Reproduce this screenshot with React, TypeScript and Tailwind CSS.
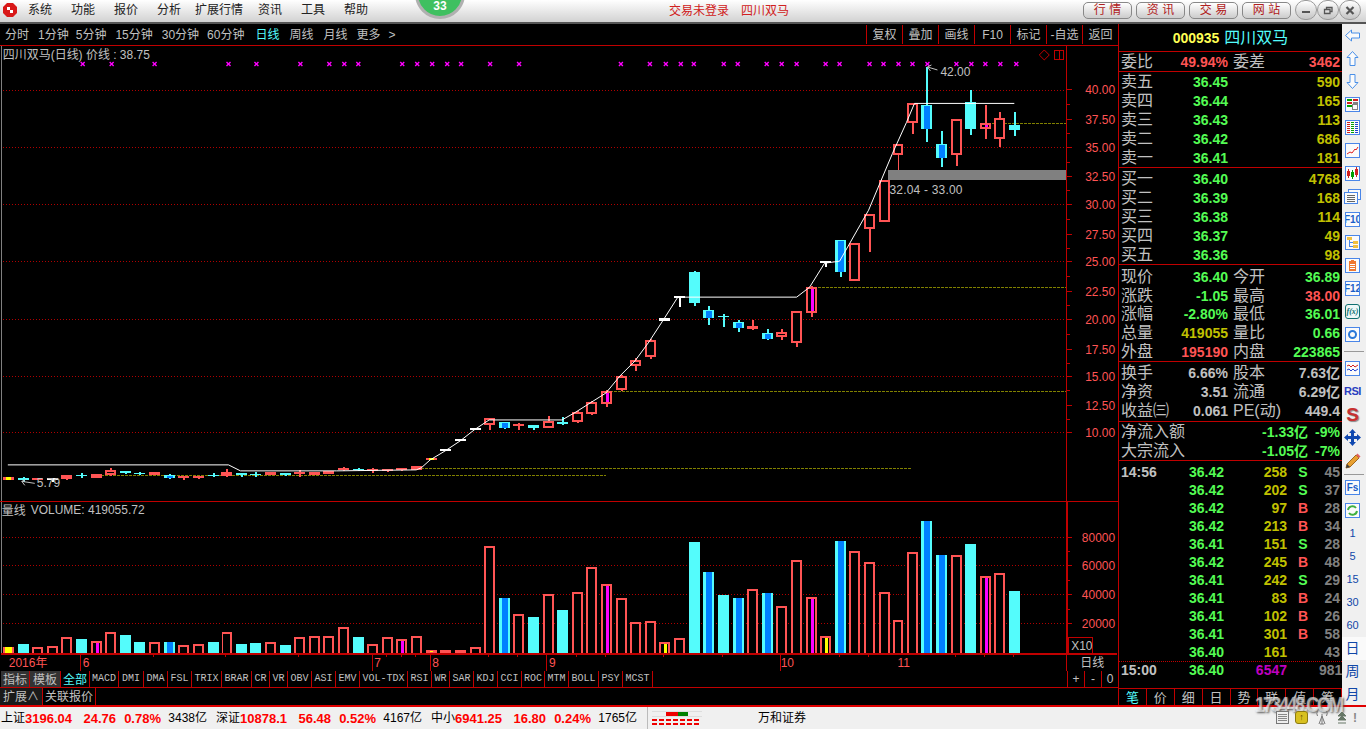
import React from 'react';

const RED = '#ff5454';
const CYAN = '#54fcfc';
const BLUE = '#0080ff';
const LINE = '#c00000';

type C = [number, number, number, number, string];

// top, bottom, wick top, wick bottom, kind: h hollow, s solid red, c cyan, b cyan+blue, m hollow+magenta, w white, y orange
const candles: C[] = [
  [478, 481, 478, 481, 'y'], [479, 481, 478, 483, 'c'], [479, 481, 479, 481, 's'], [479, 481, 479, 483, 'w'],
  [476, 480, 476, 481, 's'], [476, 477, 474, 479, 'c'], [475, 479, 475, 479, 's'], [471, 476, 469, 477, 'h'],
  [472, 474, 472, 475, 'c'], [474, 475, 473, 476, 'c'], [473, 476, 473, 476, 's'], [476, 479, 475, 480, 'b'],
  [477, 479, 477, 481, 's'], [477, 479, 477, 480, 's'], [476, 477, 474, 478, 'c'], [473, 477, 470, 478, 'h'],
  [474, 476, 474, 478, 'c'], [475, 476, 473, 478, 'c'], [473, 476, 473, 476, 's'], [474, 476, 474, 477, 'c'],
  [473, 475, 471, 478, 's'], [473, 476, 473, 476, 's'], [472, 475, 472, 475, 's'], [469, 471, 468, 472, 's'],
  [470, 471, 469, 472, 'c'], [470, 472, 469, 474, 's'], [470, 472, 470, 473, 's'], [469, 471, 469, 472, 's'],
  [467, 471, 467, 471, 's'], [459, 461, 459, 461, 'y'], [450, 452, 450, 452, 'w'], [440, 442, 440, 442, 'w'],
  [429, 431, 429, 431, 'w'], [419, 426, 419, 431, 'h'], [423, 429, 423, 430, 'b'], [425, 427, 424, 431, 's'],
  [426, 429, 426, 431, 'c'], [422, 429, 417, 429, 'h'], [423, 425, 418, 426, 'c'], [413, 423, 412, 424, 'h'],
  [403, 415, 402, 416, 'h'], [392, 405, 391, 408, 'm'], [376, 391, 375, 392, 'h'], [360, 366, 358, 371, 'h'],
  [340, 357, 339, 359, 'h'], [318, 321, 318, 321, 'w'], [296, 298, 296, 307, 'w'], [272, 303, 271, 306, 'c'],
  [310, 318, 306, 325, 'b'], [316, 317, 314, 327, 'c'], [322, 328, 320, 332, 'b'], [326, 329, 320, 330, 's'],
  [333, 339, 329, 340, 'b'], [332, 337, 329, 340, 'h'], [311, 343, 311, 347, 'h'], [287, 313, 286, 317, 'm'],
  [261, 263, 261, 267, 'w'], [240, 272, 240, 277, 'b'], [243, 281, 243, 281, 'h'], [214, 229, 214, 252, 'h'],
  [180, 222, 180, 222, 'h'], [144, 155, 144, 170, 'h'], [103, 123, 103, 134, 'h'], [105, 129, 67, 142, 'b'],
  [144, 158, 131, 167, 'b'], [119, 155, 119, 166, 'h'], [102, 129, 90, 135, 'c'], [123, 129, 105, 139, 'm'],
  [118, 139, 112, 147, 'h'], [125, 130, 112, 136, 'c'],
];

const volumes: [number, string][] = [
  [648, 'y'], [645, 'c'], [648, 'h'], [647, 'h'], [638, 'h'], [640, 'c'], [642, 'm'], [633, 'h'], [636, 'c'], [643, 'c'],
  [643, 'h'], [643, 'b'], [646, 'h'], [645, 'h'], [643, 'c'], [633, 'h'], [645, 'c'], [644, 'c'], [643, 'h'], [646, 'c'],
  [638, 'h'], [637, 'h'], [637, 'h'], [628, 'h'], [638, 'c'], [645, 'h'], [638, 'h'], [640, 'm'], [637, 'h'], [651, 's'],
  [651, 's'], [651, 's'], [648, 'h'], [547, 'h'], [599, 'b'], [615, 'h'], [618, 'c'], [595, 'h'], [611, 'c'], [593, 'h'],
  [568, 'h'], [585, 'm'], [599, 'h'], [623, 'h'], [622, 'h'], [643, 'k'], [639, 'h'], [543, 'c'], [573, 'b'], [596, 'c'],
  [599, 'b'], [590, 'h'], [594, 'b'], [607, 'h'], [561, 'h'], [598, 'm'], [637, 'k'], [542, 'b'], [552, 'h'], [563, 'h'],
  [593, 'h'], [621, 'h'], [553, 'h'], [522, 'b'], [556, 'b'], [556, 'h'], [545, 'c'], [577, 'm'], [574, 'h'], [592, 'c'],
];

const marks = [82, 111, 154, 228, 256, 300, 329, 344, 358, 402, 417, 432, 447, 461, 490, 519, 621, 650, 666, 681, 694, 724, 738, 767, 782, 797, 826, 840, 870, 884, 899, 913, 928, 957, 972, 986, 1001, 1017];

const prices: [string, number][] = [
  ['40.00', 89], ['37.50', 119], ['35.00', 147], ['32.50', 176], ['30.00', 204], ['27.50', 234], ['25.00', 261],
  ['22.50', 291], ['20.00', 319], ['17.50', 349], ['15.00', 376], ['12.50', 406], ['10.00', 433],
];

const cxOf = (i: number) => Math.round(7 + i * 14.61);

function Candle({ d, i }: { d: C; i: number }) {
  const [top, bottom, wt, wb, kind] = d;
  const cx = cxOf(i);
  const h = Math.max(bottom - top, 1);
  const main = kind === 'c' || kind === 'b' ? CYAN : kind === 'w' ? '#ffffff' : RED;
  return (
    <g>
      <rect x={cx} y={wt} width={2} height={wb - wt} fill={main} />
      <rect x={cx - 5} y={top} width={11} height={h} fill={main} />
      {(kind === 'h' || kind === 'm') && h > 4 && <rect x={cx - 3} y={top + 2} width={7} height={h - 4} fill="#000" />}
      {kind === 'b' && <rect x={cx - 2} y={top + 1} width={6} height={h - 1} fill={BLUE} />}
      {kind === 'm' && <rect x={cx} y={top + 2} width={3} height={h - 4} fill="#ff00ff" />}
      {kind === 'y' && <rect x={cx - 2} y={top} width={5} height={h} fill="#ffff00" />}
    </g>
  );
}

function VolBar({ top, kind, i }: { top: number; kind: string; i: number }) {
  const cx = cxOf(i);
  const h = 654 - top;
  const solid = kind === 'c' || kind === 'b';
  return (
    <g>
      <rect x={cx - 5} y={top} width={11} height={h} fill={solid ? CYAN : RED} />
      {!solid && kind !== 's' && kind !== 'y' && h > 4 && <rect x={cx - 3} y={top + 2} width={7} height={h - 2} fill="#000" />}
      {kind === 'b' && <rect x={cx - 2} y={top} width={6} height={h} fill={BLUE} />}
      {kind === 'm' && <rect x={cx} y={top + 2} width={3} height={h - 2} fill="#ff00ff" />}
      {kind === 'k' && <rect x={cx} y={top + 2} width={3} height={h - 2} fill="#ffff00" />}
      {kind === 'y' && <rect x={cx - 3} y={top} width={7} height={h} fill="#ffff00" />}
      {kind === 's' && i === 29 && <rect x={cx - 1} y={top + 1} width={3} height={1} fill="#ffff00" />}
    </g>
  );
}

function MainChart() {
  const trend = '7,465 228,465 240,471 336,471 416,470 421,468 430,460 445,451 460,441 474,430 489,420 562,420 576,412 606,393 620,376 635,361 649,342 664,319 678,297 797,297 810,287 825,263 840,261 869,210 893,153 907,122 915,103 1015,103';
  return (
    <svg className="block" width={1118} height={456} viewBox="0 46 1118 456" shapeRendering="crispEdges">
      <rect x={0} y={46} width={1} height={456} fill="#808080" />
      {[90, 147, 204, 261, 319, 376, 433].map(y => (
        <line key={y} x1={2} x2={1067} y1={y + 0.5} y2={y + 0.5} stroke="#b00000" strokeDasharray="1 2" />
      ))}
      <line x1={985} x2={1067} y1={123.5} y2={123.5} stroke="#808000" strokeDasharray="3 1" />
      <line x1={810} x2={1067} y1={287.5} y2={287.5} stroke="#808000" strokeDasharray="3 1" />
      <line x1={606} x2={1067} y1={392.5} y2={392.5} stroke="#808000" strokeDasharray="3 1" />
      <line x1={421} x2={912} y1={469.5} y2={469.5} stroke="#808000" strokeDasharray="3 1" />
      <line x1={100} x2={606} y1={476.5} y2={476.5} stroke="#808000" strokeDasharray="3 1" />
      <rect x={888} y={170} width={179} height={10} fill="#808080" />
      {candles.map((d, i) => <Candle key={i} d={d} i={i} />)}
      <polyline points={trend} transform="translate(0 0.5)" fill="none" stroke="#ffffff" strokeWidth={1} shapeRendering="auto" />
      {marks.map(x => (
        <g key={x} stroke="#ff00ff" strokeWidth={1.4} shapeRendering="auto">
          <line x1={x - 2} y1={62} x2={x + 2} y2={66} />
          <line x1={x - 2} y1={66} x2={x + 2} y2={62} />
        </g>
      ))}
      <text x={2} y={59} fontSize={12} fill="#c0c0c0">四川双马(日线) 价线 : 38.75</text>
      <text x={890} y={194} fontSize={12} fill="#c0c0c0" letterSpacing={0.2}>32.04 - 33.00</text>
      <g stroke="#c0c0c0" fill="none" shapeRendering="auto">
        <path d="M928 67 L938 70 M928 67 L932 65 M928 67 L931 71" />
        <path d="M21 482 L34 484 M21 482 L25 480 M21 482 L24 486" />
      </g>
      <text x={941} y={76} fontSize={12} fill="#c0c0c0">42.00</text>
      <text x={36} y={488} fontSize={12} fill="#c0c0c0">5.79</text>
      <path d="M1045 50 L1050 55 L1045 60 L1040 55 Z" fill="none" stroke="#c00000" shapeRendering="auto" />
      <rect x={1055.5} y={50.5} width={9} height={9} fill="none" stroke="#c00000" />
      <rect x={1060} y={50} width={1} height={10} fill="#c00000" />
      <rect x={1067} y={46} width={1} height={456} fill={LINE} />
      {prices.map(([t, y], i) => (
        <g key={t}>
          <rect x={1068} y={y} width={5} height={1} fill={LINE} />
          {i > 0 && <rect x={1068} y={Math.round((y + prices[i - 1][1]) / 2)} width={3} height={1} fill={LINE} />}
          <text x={1116} y={y + 5} fontSize={12} textAnchor="end" fill={RED}>{t}</text>
        </g>
      ))}
    </svg>
  );
}

function VolChart() {
  const minor = [152, 225, 298, 386, 401, 415, 488, 517, 576, 605, 663, 722, 839, 868, 956, 985, 1014];
  const dates: [string, number][] = [['6', 82], ['7', 374], ['8', 432], ['9', 549], ['10', 781], ['11', 898]];
  return (
    <svg className="block" width={1118} height={169} viewBox="0 503 1118 169" shapeRendering="crispEdges">
      <rect x={0} y={503} width={1} height={152} fill="#808080" />
      {[538, 566, 595, 624].map(y => (
        <line key={y} x1={2} x2={1067} y1={y + 0.5} y2={y + 0.5} stroke="#b00000" strokeDasharray="1 2" />
      ))}
      {volumes.map(([top, kind], i) => <VolBar key={i} top={top} kind={kind} i={i} />)}
      <text x={1} y={516} fontSize={12} fill="#c0c0c0">量线</text>
      <text x={30} y={515} fontSize={12} fill="#c0c0c0">VOLUME: 419055.72</text>
      <rect x={1067} y={503} width={2} height={152} fill={LINE} />
      {[['80000', 538], ['60000', 566], ['40000', 595], ['20000', 624]].map(([t, y]) => (
        <g key={t as string}>
          <rect x={1068} y={y as number} width={5} height={1} fill={LINE} />
          <text x={1116} y={(y as number) + 5} fontSize={12} textAnchor="end" fill={RED}>{t}</text>
        </g>
      ))}
      {[552, 581, 610].map(y => <rect key={y} x={1068} y={y} width={3} height={1} fill={LINE} />)}
      <rect x={1069.5} y={638.5} width={24} height={16} fill="none" stroke={LINE} />
      <text x={1072} y={651} fontSize={12} fill="#c0c0c0">X10</text>
      <rect x={0} y={654} width={1118} height={2} fill={LINE} />
      {minor.map(x => <rect key={x} x={x} y={656} width={1} height={2} fill={LINE} />)}
      {[79, 372, 430, 546, 780, 897].map(x => <rect key={x} x={x} y={655} width={1} height={17} fill={LINE} />)}
      <rect x={1067} y={655} width={1} height={17} fill={LINE} />
      <text x={8} y={668} fontSize={12} fill={RED}>2016年</text>
      {dates.map(([t, x]) => <text key={t} x={x} y={668} fontSize={12} fill={RED}>{t}</text>)}
      <text x={1093} y={668} fontSize={12} textAnchor="middle" fill="#c0c0c0">日线</text>
    </svg>
  );
}

function TopBar() {
  const menus: [string, string][] = [['系统', 'ml-[11px]'], ['功能', 'ml-[19px]'], ['报价', 'ml-[19px]'], ['分析', 'ml-[19px]'], ['扩展行情', 'ml-[14px]'], ['资讯', 'ml-[15px]'], ['工具', 'ml-[19px]'], ['帮助', 'ml-[19px]']];
  return (
    <div className="h-[24px] flex items-center relative bg-linear-to-b from-[#ffffff] to-[#d2d2d2] border-b-2 border-[#555555] overflow-hidden">
      <svg width={14} height={14} viewBox="0 0 14 14" className="ml-[3px] -mt-[2px]">
        <path d="M4 0h6l4 4v6l-4 4H4L0 10V4z" fill="#d81818" />
        <rect x={4} y={4} width={3} height={3} fill="#fff" />
        <rect x={7} y={7} width={3} height={3} fill="#fff" />
      </svg>
      {menus.map(([t, c]) => <span key={t} className={`${c} text-[12px] leading-none text-[#222222] -mt-[2px]`}>{t}</span>)}
      <div className="absolute left-[415px] -top-[31px] w-[50px] h-[50px] rounded-full bg-[#3fc060] border-[3px] border-[#b0b0b0] flex items-end justify-center pb-[4px]">
        <span className="text-[12px] font-bold text-white leading-none">33</span>
      </div>
      <span className="absolute left-[669px] top-[4px] text-[12px] leading-[14px] text-[#d02020]">交易未登录</span>
      <span className="absolute left-[741px] top-[4px] text-[12px] leading-[14px] text-[#d02020]">四川双马</span>
      <div className="ml-auto flex items-center gap-[4px] -mt-[2px]">
        {['行 情', '资 讯', '交 易', '网 站'].map(t => (
          <div key={t} className="w-[49px] h-[17px] rounded-[5px] border border-[#888888] bg-linear-to-b from-[#ffffff] to-[#cccccc] flex items-center justify-center text-[12px] leading-none text-[#b02020]">{t}</div>
        ))}
        <div className="flex mr-[5px]">
          <WinBtn><path d="M3 8 H11" stroke="#555555" strokeWidth={2} fill="none" /></WinBtn>
          <WinBtn><path d="M5.5 5.5 V3.5 H11 V7.5 H9 M3.5 5.5 H9 V9.5 H3.5 Z" stroke="#555555" strokeWidth={1.3} fill="none" /></WinBtn>
          <WinBtn><path d="M3.5 3 L10.5 10 M10.5 3 L3.5 10" stroke="#555555" strokeWidth={2.2} fill="none" /></WinBtn>
        </div>
      </div>
    </div>
  );
}

function WinBtn({ children }: { children: React.ReactNode }) {
  return (
    <div className="w-[22px] h-[20px] rounded-full border border-[#9a9a9a] bg-linear-to-b from-[#ffffff] to-[#c4c4c4] flex items-center justify-center">
      <svg width={14} height={13} viewBox="0 0 14 13">{children}</svg>
    </div>
  );
}

function ToolBar() {
  const left: [string, string][] = [
    ['分时', 'ml-[5px]'], ['1分钟', 'ml-[9px]'], ['5分钟', 'ml-[7px]'], ['15分钟', 'ml-[9px]'], ['30分钟', 'ml-[9px]'], ['60分钟', 'ml-[8px]'],
    ['日线', 'ml-[11px] text-[#54fcfc]'], ['周线', 'ml-[10px]'], ['月线', 'ml-[10px]'], ['更多', 'ml-[9px]'], ['>', 'ml-[8px]'],
  ];
  return (
    <div className="h-[22px] flex items-center pt-[1px] border-b border-[#c00000] text-[12px] leading-none text-[#c0c0c0]">
      {left.map(([t, c]) => <span key={t} className={c}>{t}</span>)}
      <div className="ml-auto flex h-full -mt-[1px]">
        {['复权', '叠加', '画线', 'F10', '标记', '-自选', '返回'].map(t => (
          <div key={t} className="w-[36px] flex items-center justify-center pt-[1px] border-l border-[#c00000]">{t}</div>
        ))}
      </div>
    </div>
  );
}

function TabRows() {
  const cjk = "text-[12px] [font-family:'Noto_Sans_CJK_SC',sans-serif]";
  const latin = "text-[10px] [font-family:'Liberation_Mono',monospace]";
  const tabs: [string, string, string][] = [
    ['指标', 'w-[29px]', `bg-[#333333] ${cjk}`], ['模板', 'w-[31px]', `bg-[#333333] ${cjk}`], ['全部', 'w-[29px]', `${cjk} text-[#54fcfc]`],
    ['MACD', 'w-[29px]', latin], ['DMI', 'w-[25px]', latin], ['DMA', 'w-[24px]', latin], ['FSL', 'w-[24px]', latin], ['TRIX', 'w-[30px]', latin], ['BRAR', 'w-[30px]', latin],
    ['CR', 'w-[18px]', latin], ['VR', 'w-[18px]', latin], ['OBV', 'w-[24px]', latin], ['ASI', 'w-[24px]', latin], ['EMV', 'w-[24px]', latin], ['VOL-TDX', 'w-[48px]', latin],
    ['RSI', 'w-[24px]', latin], ['WR', 'w-[18px]', latin], ['SAR', 'w-[24px]', latin], ['KDJ', 'w-[24px]', latin], ['CCI', 'w-[24px]', latin], ['ROC', 'w-[23px]', latin],
    ['MTM', 'w-[24px]', latin], ['BOLL', 'w-[30px]', latin], ['PSY', 'w-[24px]', latin], ['MCST', 'w-[30px]', latin],
  ];
  return (
    <>
      <div className="h-[17px] flex border-b border-[#c00000] text-[#c0c0c0]">
        <div className="w-[1px]" />
        {tabs.map(([t, w, c]) => (
          <div key={t} className={`${w} ${c} flex items-center justify-center border-r border-[#c00000] leading-none`}>{t}</div>
        ))}
        <div className="ml-auto flex text-[12px] leading-none">
          {['+', '-', '0'].map(t => <div key={t} className="w-[17px] flex items-center justify-center border-l border-[#c00000]">{t}</div>)}
        </div>
      </div>
      <div className="h-[17px] flex text-[12px] leading-none text-[#c0c0c0]">
        <div className="w-[43px] flex items-center justify-center border-r border-[#c00000] bg-[#1a1a1a]">扩展∧</div>
        <div className="w-[53px] flex items-center justify-center border-r border-[#c00000]">关联报价</div>
      </div>
    </>
  );
}

function Row({ l, v, vc, r, rv, rc }: { l: string; v: string; vc: string; r?: string; rv: string; rc: string }) {
  return (
    <div className="grid grid-cols-[107px_107px] gap-x-[5px] pl-[2px] items-center">
      <div className="flex justify-between items-center h-full">
        <span className="text-[16px] leading-none text-[#c0c0c0]">{l}</span>
        <span className={`text-[14px] font-bold leading-none ${vc}`}>{v}</span>
      </div>
      <div className="flex justify-between items-center h-full">
        <span className="text-[16px] leading-none text-[#c0c0c0]">{r}</span>
        <span className={`text-[14px] font-bold leading-none ${rc}`}>{rv}</span>
      </div>
    </div>
  );
}

const G = 'text-[#54fc54]';
const Y = 'text-[#c0c000]';
const R = 'text-[#ff5454]';
const W = 'text-[#c0c0c0]';

const ticks: [string, string, string, string][] = [
  ['36.42', '258', 'S', '45'], ['36.42', '202', 'S', '37'], ['36.42', '97', 'B', '28'], ['36.42', '213', 'B', '34'],
  ['36.41', '151', 'S', '28'], ['36.42', '245', 'B', '48'], ['36.41', '242', 'S', '29'], ['36.41', '83', 'B', '24'],
  ['36.41', '102', 'B', '26'], ['36.41', '301', 'B', '58'], ['36.40', '161', '', '43'],
];

function QuotePanel() {
  return (
    <div className="w-[224px] border-l border-[#c00000] flex flex-col">
      <div className="h-[28px] flex items-center justify-center gap-[5px] border-b border-[#c00000]">
        <span className="text-[14px] font-bold leading-none text-[#ffff54]">000935</span>
        <span className="text-[16px] leading-none text-[#54fcfc]">四川双马</span>
      </div>
      <div className="h-[20px] grid border-b border-[#c00000]">
        <Row l="委比" v="49.94%" vc={R} r="委差" rv="3462" rc={R} />
      </div>
      <div className="h-[96px] grid grid-rows-5 border-b border-[#c00000]">
        {[['卖五', '36.45', '590'], ['卖四', '36.44', '165'], ['卖三', '36.43', '113'], ['卖二', '36.42', '686'], ['卖一', '36.41', '181']].map(([a, b, c]) => (
          <Row key={a} l={a} v={b} vc={G} rv={c} rc={Y} />
        ))}
      </div>
      <div className="h-[97px] grid grid-rows-5 pt-[2px] border-b border-[#c00000]">
        {[['买一', '36.40', '4768'], ['买二', '36.39', '168'], ['买三', '36.38', '114'], ['买四', '36.37', '49'], ['买五', '36.36', '98']].map(([a, b, c]) => (
          <Row key={a} l={a} v={b} vc={G} rv={c} rc={Y} />
        ))}
      </div>
      <div className="h-[97px] grid grid-rows-5 pt-[3px] border-b border-[#c00000]">
        <Row l="现价" v="36.40" vc={G} r="今开" rv="36.89" rc={G} />
        <Row l="涨跌" v="-1.05" vc={G} r="最高" rv="38.00" rc={R} />
        <Row l="涨幅" v="-2.80%" vc={G} r="最低" rv="36.01" rc={G} />
        <Row l="总量" v="419055" vc={Y} r="量比" rv="0.66" rc={G} />
        <Row l="外盘" v="195190" vc={R} r="内盘" rv="223865" rc={G} />
      </div>
      <div className="h-[60px] grid grid-rows-3 pt-[1px] border-b border-[#c00000]">
        <Row l="换手" v="6.66%" vc={W} r="股本" rv="7.63亿" rc={W} />
        <Row l="净资" v="3.51" vc={W} r="流通" rv="6.29亿" rc={W} />
        <Row l="收益㈢" v="0.061" vc={W} r="PE(动)" rv="449.4" rc={W} />
      </div>
      <div className="h-[39px] grid grid-rows-2 pt-[1px] border-b border-[#c00000]">
        {[['净流入额', '-1.33亿', '-9%'], ['大宗流入', '-1.05亿', '-7%']].map(([a, b, c]) => (
          <div key={a} className="flex items-center pl-[2px] pr-[2px] h-full">
            <span className="text-[16px] leading-none text-[#c0c0c0]">{a}</span>
            <span className={`ml-auto text-[14px] font-bold leading-none ${G}`}>{b}</span>
            <span className={`w-[32px] text-right text-[14px] font-bold leading-none ${G}`}>{c}</span>
          </div>
        ))}
      </div>
      <div className="flex-1 flex flex-col pt-[2px] text-[14px] font-bold">
        {ticks.map(([p, v, s, n], i) => (
          <div key={i} className="h-[18px] grid grid-cols-[40px_63px_63px_32px_21px] items-center pl-[2px] leading-none">
            <span className={W}>{i === 0 ? '14:56' : ''}</span>
            <span className={`text-right ${G}`}>{p}</span>
            <span className={`text-right ${Y}`}>{v}</span>
            <span className={`text-center ${s === 'B' ? R : G}`}>{s}</span>
            <span className="text-right text-[#808080]">{n}</span>
          </div>
        ))}
        <div className="border-t border-dotted border-[#c00000]" />
        <div className="h-[15px] grid grid-cols-[40px_63px_63px_32px_21px] items-center pl-[2px] leading-none">
          <span className={W}>15:00</span>
          <span className={`text-right ${G}`}>36.40</span>
          <span className="text-right text-[#c000c0]">6547</span>
          <span />
          <span className="text-right text-[#808080]">981</span>
        </div>
      </div>
      <div className="h-[17px] flex border-t border-[#c00000] text-[13px] leading-none text-[#c0c0c0]">
        {['笔', '价', '细', '日', '势', '联', '值', '筹'].map((t, i) => (
          <div key={t} className={`w-[28px] flex items-center justify-center border-r border-[#c00000] ${i === 0 ? 'text-[#54fcfc]' : ''}`}>{t}</div>
        ))}
      </div>
    </div>
  );
}

function Box({ children }: { children?: React.ReactNode }) {
  return (
    <div className="w-[15px] h-[15px] border border-[#4a86e8] bg-[#fbfbfb] flex items-center justify-center overflow-hidden leading-none">{children}</div>
  );
}

function Ico({ children }: { children: React.ReactNode }) {
  return <svg width={13} height={13} viewBox="0 0 13 13" shapeRendering="crispEdges" className="shrink-0">{children}</svg>;
}

function Arrow({ d }: { d: string }) {
  return (
    <svg width={17} height={17} viewBox="0 0 17 17">
      <path d={d} fill="#fbfbfb" stroke="#4a90e8" />
    </svg>
  );
}

function Cell({ children, className = '' }: { children: React.ReactNode; className?: string }) {
  return <div className={`h-[23px] shrink-0 flex items-center justify-center pr-[3px] ${className}`}>{children}</div>;
}

function SideBar() {
  return (
    <div className="w-[24px] bg-[#f0f0f0] flex flex-col">
      <Cell><Arrow d="M1.5 8.5 L7.5 3 V6 H15.5 V11 H7.5 V14 Z" /></Cell>
      <Cell><Arrow d="M8.5 1.5 L14 7.5 H11 V15.5 H6 V7.5 H3 Z" /></Cell>
      <Cell><Arrow d="M8.5 15.5 L14 9.5 H11 V1.5 H6 V9.5 H3 Z" /></Cell>
      <Cell><Box><Ico><rect x={1} y={1} width={5} height={2} fill="#00a000" /><rect x={1} y={4} width={5} height={2} fill="#d02020" /><rect x={1} y={7} width={5} height={2} fill="#00a000" /><rect x={7} y={1} width={5} height={2} fill="#d02020" /><rect x={7} y={4} width={5} height={2} fill="#808080" /><circle cx={9} cy={9} r={3} fill="none" stroke="#808080" /></Ico></Box></Cell>
      <Cell><Box><Ico>{[1, 5, 9].map((x, k) => [1, 3, 5, 7, 9, 11].map(y => <rect key={`${x}-${y}`} x={x} y={y} width={3} height={1} fill={k === 0 ? '#d02020' : k === 1 ? '#00a000' : '#2040d0'} />))}</Ico></Box></Cell>
      <Cell><Box><Ico><path d="M1 10 L4 8 L6 9 L9 5 L10 6 L12 3" fill="none" stroke="#e02020" shapeRendering="auto" /></Ico></Box></Cell>
      <Cell><Box><Ico><rect x={1} y={4} width={3} height={5} fill="#d02020" /><rect x={2} y={2} width={1} height={9} fill="#d02020" /><rect x={5} y={5} width={3} height={5} fill="#00a000" /><rect x={6} y={3} width={1} height={9} fill="#00a000" /><rect x={9} y={2} width={3} height={6} fill="#d02020" /><rect x={10} y={0} width={1} height={10} fill="#d02020" /></Ico></Box></Cell>
      <Cell>
        <svg width={17} height={15} viewBox="0 0 17 15" shapeRendering="crispEdges">
          <rect x={4.5} y={0.5} width={12} height={10} fill="#fbfbfb" stroke="#4a86e8" />
          <rect x={0.5} y={3.5} width={13} height={11} fill="#fbfbfb" stroke="#4a86e8" />
          {[6, 8, 10, 12].map(y => <rect key={y} x={3} y={y} width={8} height={1} fill="#666666" />)}
        </svg>
      </Cell>
      <Cell><Box><span className="text-[10px] font-bold text-[#1c5fc8]">F10</span></Box></Cell>
      <Cell><Box><Ico><rect x={1} y={1} width={5} height={3} fill="#f0c040" /><rect x={7} y={5} width={5} height={3} fill="#f0c040" /><rect x={7} y={9} width={5} height={3} fill="#f0c040" /><path d="M3 4 V10 H7 M3 6 H7" fill="none" stroke="#4a86e8" /></Ico></Box></Cell>
      <Cell><Box><Ico><rect x={3} y={2} width={7} height={10} fill="#f07830" /><rect x={5} y={1} width={3} height={2} fill="#f07830" /><rect x={4} y={5} width={5} height={1} fill="#fff" /><rect x={4} y={7} width={5} height={1} fill="#fff" /><rect x={4} y={9} width={5} height={1} fill="#fff" /></Ico></Box></Cell>
      <Cell><Box><span className="text-[10px] font-bold text-[#1c5fc8]">F12</span></Box></Cell>
      <Cell>
        <div className="w-[15px] h-[15px] rounded-[3px] border border-[#107070] bg-[#eef8f8] flex items-center justify-center text-[8px] font-bold italic leading-none text-[#107070] [font-family:'Liberation_Serif',serif]">f(x)</div>
      </Cell>
      <Cell><Box><div className="w-[9px] h-[9px] rounded-full border-2 border-[#2a78d8]" /></Box></Cell>
      <div className="h-[11px] shrink-0 flex items-center px-[2px]"><div className="w-full h-[1px] bg-[#999999]" /></div>
      <Cell><Box><Ico><path d="M1 4 L3 3 L5 5 L7 3 L9 5 L12 3" fill="none" stroke="#d02020" shapeRendering="auto" /><path d="M1 8 L3 7 L5 9 L7 7 L9 9 L12 7" fill="none" stroke="#2040d0" shapeRendering="auto" /></Ico></Box></Cell>
      <Cell><span className="text-[11px] font-bold leading-none text-[#2a3fc0] tracking-[-0.5px]">RSI</span></Cell>
      <Cell><span className="text-[19px] font-bold leading-none text-[#c83030] [text-shadow:1px_1px_1px_#888888]">S</span></Cell>
      <Cell>
        <svg width={17} height={17} viewBox="0 0 17 17"><path d="M8.5 0 L12 4 H10 V7 H13 V5 L17 8.5 L13 12 V10 H10 V13 H12 L8.5 17 L5 13 H7 V10 H4 V12 L0 8.5 L4 5 V7 H7 V4 H5 Z" fill="#1048b0" /></svg>
      </Cell>
      <Cell>
        <svg width={16} height={16} viewBox="0 0 16 16"><path d="M1 15 L2 11 L11 2 L14 5 L5 14 Z" fill="#e8a030" stroke="#a06820" /><path d="M11 2 L12.5 0.5 L15.5 3.5 L14 5 Z" fill="#e06060" /><path d="M1 15 L2 11 L5 14 Z" fill="#404040" /></svg>
      </Cell>
      <div className="h-[4px] shrink-0 flex items-center px-[2px]"><div className="w-full h-[1px] bg-[#999999]" /></div>
      <Cell><Box><span className="text-[10px] font-bold text-[#1c5fc8]">Fs</span></Box></Cell>
      <Cell><Box><Ico><path d="M2 6 A4.5 4.5 0 0 1 10 4 M11 7 A4.5 4.5 0 0 1 3 9" fill="none" stroke="#40b040" strokeWidth={2} shapeRendering="auto" /></Ico></Box></Cell>
      {['1', '5', '15', '30', '60'].map(t => <Cell key={t} className="text-[11px] text-[#1048a8]">{t}</Cell>)}
      <Cell className="text-[14px] bg-[#fafafa] text-[#1048a8]">日</Cell>
      <Cell className="text-[14px] text-[#1048a8]">周</Cell>
      <div className="h-[22px] shrink-0 flex items-center justify-center pr-[3px] text-[14px] text-[#1048a8]">月</div>
    </div>
  );
}

function StatusBar() {
  const segs: [string, string, string, string, string][] = [
    ['上证', '3196.04', '24.76', '0.78%', '3438亿'],
    ['深证', '10878.1', '56.48', '0.52%', '4167亿'],
    ['中小', '6941.25', '16.80', '0.24%', '1765亿'],
  ];
  return (
    <div className="h-[24px] flex items-center border-t-2 border-[#e00000] bg-[#f0f0f0] text-[12px] leading-none">
      {segs.map(([a, b, c, d, e], i) => (
        <div key={a} className={`flex items-center ${i === 0 ? 'ml-[1px]' : 'ml-[9px]'}`}>
          <span className="w-[24px] text-black">{a}</span>
          <span className="w-[49px] font-bold text-[13px] text-[#ff0000]">{b}</span>
          <span className="w-[42px] text-right font-bold text-[13px] text-[#ff0000]">{c}</span>
          <span className="w-[45px] text-right font-bold text-[13px] text-[#ff0000]">{d}</span>
          <span className="w-[46px] text-right text-black">{e}</span>
        </div>
      ))}
      <div className="ml-[10px] w-[1px] h-full bg-[#bbbbbb]" />
      <div className="ml-[4px] flex flex-col gap-[2px] w-[50px]">
        <div className="flex justify-center gap-0 h-[6px] border-y border-[#dddddd]">
          <div className="w-[12px] bg-[#ee0000]" />
          <div className="w-[10px] bg-[#008000]" />
        </div>
        <div className="flex gap-[2px]">
          {[0, 1, 2, 3, 4, 5, 6].map(k => <div key={k} className="w-[5px] h-[2px] bg-[#ee0000]" />)}
        </div>
        <div className="flex gap-[2px]">
          {[0, 1, 2, 3, 4, 5, 6].map(k => <div key={k} className="w-[5px] h-[2px] bg-[#ee0000]" />)}
        </div>
      </div>
      <span className="ml-[56px] text-black">万和证券</span>
    </div>
  );
}

// tray icons drawn over the status bar, above the watermark
function Tray() {
  return (
    <div className="absolute right-[9px] bottom-[4px] z-20 flex items-center gap-[6px]">
      <svg width={13} height={13} viewBox="0 0 13 13" shapeRendering="crispEdges"><rect x={0.5} y={0.5} width={12} height={12} fill="#eeeeee" stroke="#777777" />{[3, 5, 7, 9].map(y => <rect key={y} x={2} y={y} width={9} height={1} fill="#888888" />)}</svg>
      <div className="w-[13px] h-[13px] rounded-[3px] bg-[#d8c020] border border-[#8c7a10] flex items-center justify-center text-[9px] font-bold leading-none text-[#5a4a00]">↑</div>
      <svg width={12} height={15} viewBox="0 0 12 15" className="ml-[2px]"><path d="M6 4 V14 M3 14 L6 6 L9 14 M4 14 H8 M1.5 1 A5 5 0 0 0 1.5 6 M10.5 1 A5 5 0 0 1 10.5 6" fill="none" stroke="#777777" /></svg>
      <svg width={10} height={13} viewBox="0 0 10 13" className="ml-[3px]"><path d="M5 1 L9 5 H1 Z M5 5 L9 9 H1 Z M1 12 H9" fill="#667766" stroke="#667766" /></svg>
      <span className="text-[12px] font-bold leading-none text-[#888888]">!</span>
    </div>
  );
}

export default function App() {
  return (
    <div className="relative w-[1366px] h-[729px] overflow-hidden flex flex-col bg-black [font-family:'Liberation_Sans','Noto_Sans_CJK_SC',sans-serif]">
      <TopBar />
      <div className="h-[681px] flex">
        <div className="w-[1118px] flex flex-col">
          <ToolBar />
          <MainChart />
          <div className="h-[1px] bg-[#c00000]" />
          <VolChart />
          <TabRows />
        </div>
        <QuotePanel />
        <SideBar />
      </div>
      <StatusBar />
      <div className="absolute left-[1255px] top-[693px] z-10 origin-top scale-y-125 text-[18px] font-bold leading-none tracking-[-2px] text-white/60 [text-shadow:1px_1px_2px_#555555]">173448.COM</div>
      <Tray />
    </div>
  );
}
